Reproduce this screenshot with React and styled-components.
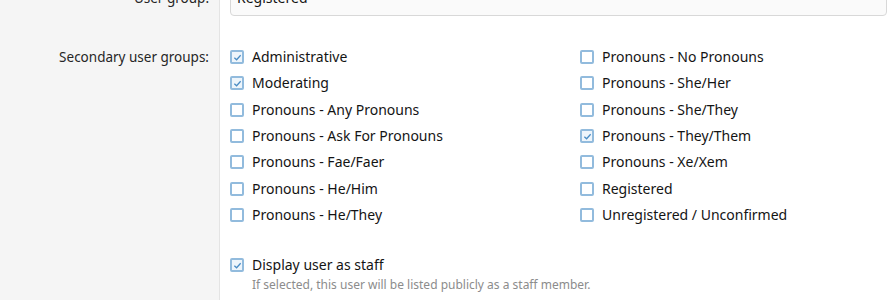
import React from "react";
import styled, { createGlobalStyle } from "styled-components";

const GlobalStyle = createGlobalStyle`
  html, body {
    margin: 0;
    padding: 0;
    background: #fff;
    overflow: hidden;
  }
  body {
    font-family: "Noto Sans", "Open Sans", sans-serif;
    font-size: 14px;
    color: #141414;
  }
`;

const Form = styled.div`
  margin-top: -28px;
  width: 887px;
`;

const FormRow = styled.div`
  display: grid;
  grid-template-columns: 220px 1fr;
`;

const RowLabel = styled.div`
  background: #f5f5f5;
  border-right: 1px solid #e4e4e4;
  text-align: right;
  padding: ${({ $top }) => $top || "10px"} 10px 0 0;
  color: #262626;
  font-size: 13.5px;
  line-height: 26px;
`;

const RowInput = styled.div`
  padding: ${({ $pad }) => $pad || "10px 0 10px 10px"};
  display: flex;
  flex-direction: column;
`;

const TextBox = styled.div`
  height: 34px;
  box-sizing: border-box;
  border: 1px solid #d8d8d8;
  border-radius: 4px;
  background: #fafafa;
  padding: 0 6px;
  line-height: 30px;
  color: #141414;
`;

const CheckGrid = styled.div`
  display: grid;
  grid-template-columns: 350px 350px;
  grid-auto-flow: column;
  grid-template-rows: repeat(7, 26.3px);
`;

const CheckItem = styled.label`
  display: flex;
  align-items: center;
  gap: 8px;
  line-height: 26px;
  white-space: nowrap;
`;

const Box = styled.span`
  width: 14px;
  height: 14px;
  box-sizing: border-box;
  border: 2px solid #92bbdd;
  border-radius: 2px;
  background: ${({ $on }) => ($on ? "#eef5fb" : "#fff")};
  display: inline-flex;
  align-items: center;
  justify-content: center;
  flex-shrink: 0;
`;

const StaffBlock = styled.div`
  margin-top: 24px;
  display: flex;
  flex-direction: column;
`;

const Hint = styled.div`
  font-size: 12px;
  color: #8c8c8c;
  line-height: 14px;
  padding-left: 22px;
`;

const groups = [
  ["Administrative", true],
  ["Moderating", true],
  ["Pronouns - Any Pronouns", false],
  ["Pronouns - Ask For Pronouns", false],
  ["Pronouns - Fae/Faer", false],
  ["Pronouns - He/Him", false],
  ["Pronouns - He/They", false],
  ["Pronouns - No Pronouns", false],
  ["Pronouns - She/Her", false],
  ["Pronouns - She/They", false],
  ["Pronouns - They/Them", true],
  ["Pronouns - Xe/Xem", false],
  ["Registered", false],
  ["Unregistered / Unconfirmed", false],
];

const Check = ({ on, children }) => (
  <CheckItem>
    <Box $on={on}>
      {on && (
        <svg width="9" height="9" viewBox="0 0 10 10">
          <path d="M1.5 5.2 L4 7.5 L8.5 2.5" fill="none" stroke="#4a8cc4" strokeWidth="1.4" />
        </svg>
      )}
    </Box>
    {children}
  </CheckItem>
);

const App = () => (
  <>
    <GlobalStyle />
    <Form>
      <FormRow>
        <RowLabel $top="13px">User group:</RowLabel>
        <RowInput>
          <TextBox>Registered</TextBox>
        </RowInput>
      </FormRow>
      <FormRow>
        <RowLabel $top="18px">Secondary user groups:</RowLabel>
        <RowInput $pad="18px 0 20px 10px">
          <CheckGrid>
            {groups.map(([name, on]) => (
              <Check key={name} on={on}>
                {name}
              </Check>
            ))}
          </CheckGrid>
          <StaffBlock>
            <Check on>Display user as staff</Check>
            <Hint>If selected, this user will be listed publicly as a staff member.</Hint>
          </StaffBlock>
        </RowInput>
      </FormRow>
    </Form>
  </>
);

export default App;
